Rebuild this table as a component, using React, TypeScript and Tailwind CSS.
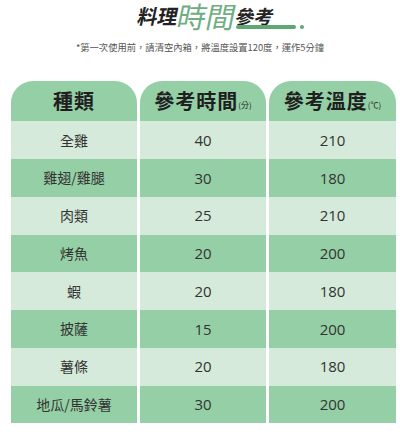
import React from "react";

const rows: [string, string, string][] = [
  ["全雞", "40", "210"],
  ["雞翅/雞腿", "30", "180"],
  ["肉類", "25", "210"],
  ["烤魚", "20", "200"],
  ["蝦", "20", "180"],
  ["披薩", "15", "200"],
  ["薯條", "20", "180"],
  ["地瓜/馬鈴薯", "30", "200"],
];

const cjk = "font-['Noto_Sans_CJK_TC','Noto_Sans',sans-serif]";

function Header({ label, unit }: { label: string; unit?: string }) {
  return (
    <div className="flex h-[40px] items-center justify-center rounded-t-[22px] bg-[#95cfa6] text-[#1f1f1f]">
      <span className="text-[20px] font-bold tracking-[1px]">{label}</span>
      {unit && <span className="mt-[8px] text-[8px] font-normal">{unit}</span>}
    </div>
  );
}

export default function App() {
  return (
    <div className={`h-[434px] w-[400px] overflow-hidden bg-white ${cjk}`}>
      <div className="flex h-[31px] items-end justify-center pl-[12px]">
        <span className="mb-[5px] -skew-x-12 text-[20px] font-bold leading-none text-[#222]">
          料理
        </span>
        <span className="-skew-x-12 text-[29px] font-normal leading-[31px] text-[#6fae82]">
          時間
        </span>
        <div className="relative mb-[6px]">
          <span className="block -skew-x-12 text-[19px] font-bold leading-none text-[#222]">參考</span>
          <div className="absolute -bottom-[4px] left-[0px] h-[4px] w-[60px] rounded-full bg-[#5fa873]" />
          <div className="absolute -bottom-[4px] left-[64px] h-[4px] w-[4px] rounded-full bg-[#5fa873]" />
        </div>
      </div>

      <p className="mt-[12px] text-center text-[9.3px] leading-none text-[#555]">
        *第一次使用前，請清空內箱，將溫度設置120度，運作5分鐘
      </p>

      <div className="ml-[11px] mt-[29px] grid grid-cols-[126px_126px_127px] gap-x-[3px]">
        <div className="flex flex-col">
          <Header label="種類" />
          {rows.map((r, i) => (
            <div
              key={i}
              className={`flex h-[37.75px] items-center justify-center text-[14px] text-[#333] ${
                i % 2 === 0 ? "bg-[#d5eadb]" : "bg-[#95cfa6]"
              }`}
            >
              {r[0]}
            </div>
          ))}
        </div>
        <div className="flex flex-col">
          <Header label="參考時間" unit="(分)" />
          {rows.map((r, i) => (
            <div
              key={i}
              className={`flex h-[37.75px] items-center justify-center font-['Open_Sans',sans-serif] text-[15px] text-[#333] ${
                i % 2 === 0 ? "bg-[#d5eadb]" : "bg-[#95cfa6]"
              }`}
            >
              {r[1]}
            </div>
          ))}
        </div>
        <div className="flex flex-col">
          <Header label="參考溫度" unit="(℃)" />
          {rows.map((r, i) => (
            <div
              key={i}
              className={`flex h-[37.75px] items-center justify-center font-['Open_Sans',sans-serif] text-[15px] text-[#333] ${
                i % 2 === 0 ? "bg-[#d5eadb]" : "bg-[#95cfa6]"
              }`}
            >
              {r[2]}
            </div>
          ))}
        </div>
      </div>
    </div>
  );
}
